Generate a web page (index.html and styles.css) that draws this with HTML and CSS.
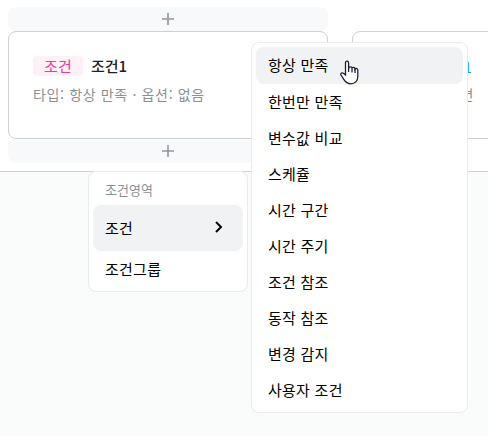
FILE: index.html
```html
<!DOCTYPE html>
<html lang="ko">

<head>
  <meta charset="UTF-8">
  <title>조건 편집</title>
  <link rel="stylesheet" href="styles.css">
</head>

<body>
  <div class="board">
    <div class="column">
      <button class="add-button">
        <svg width="12" height="12" viewBox="0 0 12 12"><path d="M6 0v12M0 6h12" /></svg>
      </button>
      <div class="card">
        <div class="card-title">
          <span class="tag">조건</span>
          <span class="name">조건1</span>
        </div>
        <p class="card-info">타입: 항상 만족 · 옵션: 없음</p>
      </div>
      <button class="add-button">
        <svg width="12" height="12" viewBox="0 0 12 12"><path d="M6 0v12M0 6h12" /></svg>
      </button>
    </div>
    <div class="column column-action">
      <div class="card">
        <div class="card-title">
          <span class="link">동작1</span>
        </div>
        <p class="card-info">화면</p>
      </div>
    </div>
  </div>

  <div class="menu menu-area">
    <div class="menu-label">조건영역</div>
    <div class="menu-item active">
      <span>조건</span>
      <svg width="8" height="12" viewBox="0 0 8 12"><path d="M1 1l5 5l-5 5" /></svg>
    </div>
    <div class="menu-item">조건그룹</div>
  </div>

  <div class="menu menu-type">
    <div class="menu-item active">항상 만족</div>
    <div class="menu-item">한번만 만족</div>
    <div class="menu-item">변수값 비교</div>
    <div class="menu-item">스케쥴</div>
    <div class="menu-item">시간 구간</div>
    <div class="menu-item">시간 주기</div>
    <div class="menu-item">조건 참조</div>
    <div class="menu-item">동작 참조</div>
    <div class="menu-item">변경 감지</div>
    <div class="menu-item">사용자 조건</div>
  </div>

  <svg class="pointer" width="19" height="25" viewBox="0 0 19 25">
    <path d="M5.5 15V3Q5.5 1.2 7 1.2Q8.6 1.2 8.6 3V8.2Q9 6.8 10.5 6.9Q12 7 12 8.4Q12.6 7.2 13.8 7.5Q15 7.8 15 9Q15.6 8.2 16.7 8.5Q17.8 8.9 17.8 10.2V16.5C17.8 21 14.8 23.8 10.8 23.8C7.4 23.8 5.4 22 3.8 19.4L1 15Q0.3 13.6 1.4 13Q2.7 12.4 3.8 13.6Z" />
    <path d="M8.6 8v4M12 8.4v4M15 9v4" />
  </svg>
</body>

</html>
```

FILE: styles.css
```css
* {
  box-sizing: border-box;
}

body {
  margin: 0;
  height: 436px;
  overflow: hidden;
  background-color: #fafcfb;
  font-family: "Noto Sans CJK KR", sans-serif;
  font-size: 15px;
  letter-spacing: 0.25px;
  color: #000;
}

.board {
  display: flex;
  gap: 24px;
  height: 172px;
  padding: 7px 0 0 8px;
  overflow: hidden;
  background-color: #fff;
  border-bottom: 1px solid #cdd1d8;
}

.column {
  flex: none;
  width: 320px;
}

.column-action {
  padding-top: 24px;
}

.add-button {
  display: flex;
  justify-content: center;
  align-items: center;
  width: 100%;
  height: 24px;
  padding: 0;
  border: none;
  border-radius: 8px;
  background-color: #f8f9fb;
}

.add-button svg {
  fill: none;
  stroke: #92979f;
  stroke-width: 1.6;
}

.card {
  height: 108px;
  padding: 24px;
  border: 1px solid #cdd1d8;
  border-radius: 8px;
  background-color: #fff;
}

.card-title {
  display: flex;
  align-items: center;
  gap: 8px;
  height: 20px;
}

.tag {
  width: 50px;
  height: 20px;
  border-radius: 4px;
  background-color: #fdf0f7;
  color: #eb3d96;
  line-height: 20px;
  text-align: center;
}

.name {
  padding-bottom: 1px;
  color: #1f2126;
  font-weight: 500;
  line-height: 19px;
  letter-spacing: 0;
}

.card-info {
  margin: 8px 0 0;
  color: #8c8f94;
  font-size: 14px;
  line-height: 20px;
  letter-spacing: 0.65px;
}

.column-action .card-title,
.column-action .card-info {
  width: 97px;
  justify-content: flex-end;
  text-align: right;
}

.column-action .card-title {
  width: 95px;
}

.link {
  color: #1890ff;
}

.menu {
  position: absolute;
  padding: 4px;
  border: 1px solid #e9ebec;
  border-radius: 8px;
  background-color: #fff;
}

.menu-area {
  left: 88px;
  top: 171px;
  width: 160px;
  height: 121px;
}

.menu-type {
  left: 251px;
  top: 42px;
  width: 217px;
  height: 371px;
}

.menu-label {
  height: 29px;
  padding-left: 12px;
  color: #8c8f94;
  font-size: 13px;
  line-height: 28px;
  letter-spacing: 0;
}

.menu-item {
  display: flex;
  justify-content: space-between;
  align-items: center;
  height: 36px;
  padding: 0 20px 2px 12px;
  border-radius: 8px;
}

.menu-item svg {
  fill: none;
  stroke: #000;
  stroke-width: 2;
}

.menu-item.active {
  background-color: #f1f2f4;
}

.menu-area .active {
  height: 46px;
}

.menu-type .active {
  height: 37px;
}

.pointer {
  position: absolute;
  left: 340px;
  top: 60px;
  fill: #fff;
  stroke: #202034;
  stroke-width: 1.3;
}
```
